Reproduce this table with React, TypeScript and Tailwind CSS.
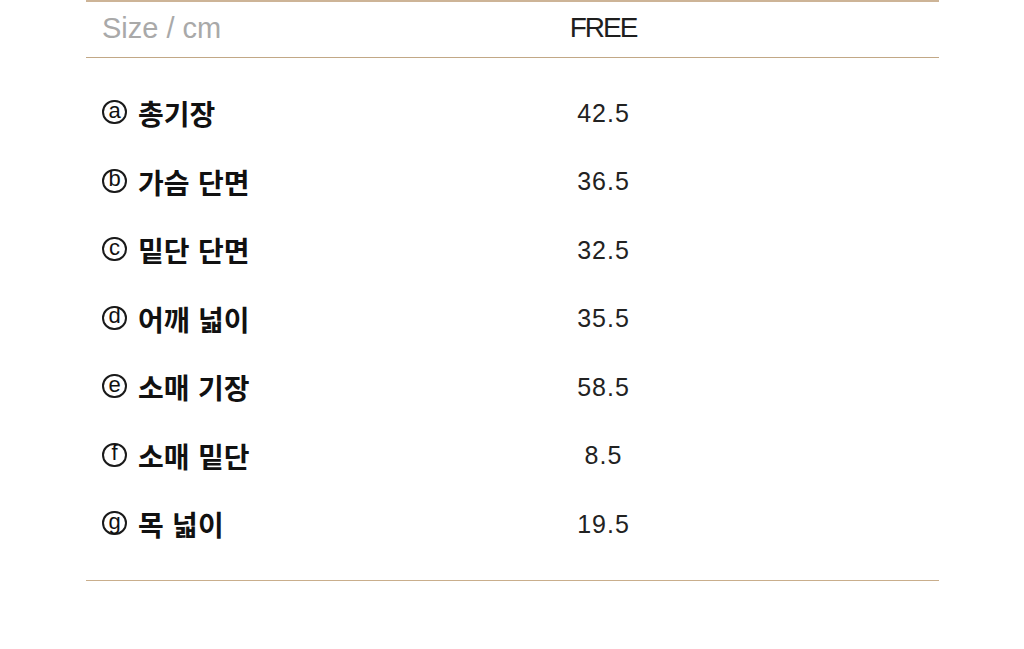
import React from "react";

const rows: [string, string, string][] = [
  ["a", "총기장", "42.5"],
  ["b", "가슴 단면", "36.5"],
  ["c", "밑단 단면", "32.5"],
  ["d", "어깨 넓이", "35.5"],
  ["e", "소매 기장", "58.5"],
  ["f", "소매 밑단", "8.5"],
  ["g", "목 넓이", "19.5"],
];

const lat = '"Liberation Sans", Arial, sans-serif';
const kr = '"Noto Sans CJK KR", sans-serif';

export default function App() {
  return (
    <div className="w-[1024px] h-[649px] bg-white" style={{ fontFamily: lat }}>
      <div className="ml-[86px] w-[853px]">
        <div className="border-t-2 border-t-[#cdb497] border-b border-b-[#c2a886] grid grid-cols-[434px_166px] h-[58px] items-center">
          <div className="pl-[16px] text-[29px] text-[#a9a9a9] leading-none pb-[3px]">Size / cm</div>
          <div className="text-center text-[28px] text-[#1e1e1e] leading-none tracking-[-2px] pb-[3px]">FREE</div>
        </div>
        <div className="py-[21px] border-b border-b-[#c9ae8c]">
          {rows.map(([c, label, v]) => (
            <div key={c} className="grid grid-cols-[434px_166px] h-[68.5px] items-center">
              <div className="pl-[16px] flex items-center gap-[11px] text-[#111] leading-none">
                <span className="w-[25px] h-[24px] shrink-0 rounded-full border-2 border-[#1a1a1a] flex items-center justify-center text-[22px] leading-none mb-[2px]" style={{ fontFamily: lat }}>
                  <span className="mb-[3px]">{c}</span>
                </span>
                <span style={{ fontFamily: kr }} className="font-bold text-[28px] [word-spacing:2px]">{label}</span>
              </div>
              <div className="text-center text-[25px] text-[#222] leading-none tracking-[1px] pl-[1px]">{v}</div>
            </div>
          ))}
        </div>
      </div>
    </div>
  );
}
